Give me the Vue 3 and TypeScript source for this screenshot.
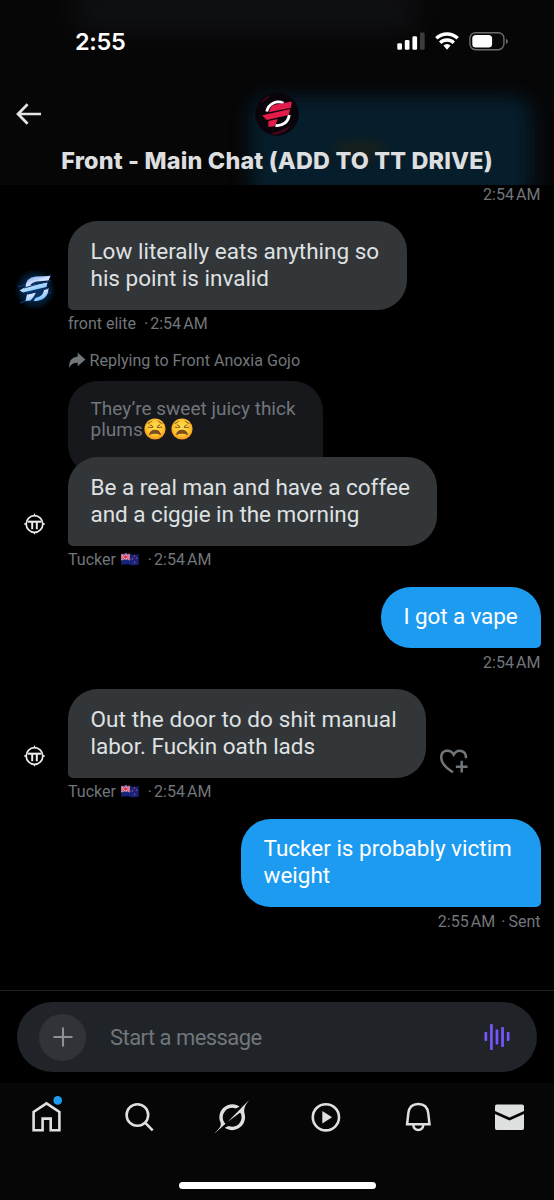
<script setup lang="ts">
interface Message {
  id: number
  own: boolean
  lines: { text: string; fit: string }[]
  bubble: string
  author?: string
  flag?: boolean
  avatar?: 'elite' | 'tucker'
  time: string
  sent?: boolean
  reply?: boolean
  like?: boolean
}

const messages: Message[] = [
  { id: 1, own: false, avatar: 'elite', author: 'front elite', time: '2:54 AM', bubble: 'b1',
    lines: [{ text: 'Low literally eats anything so', fit: 'l1' }, { text: 'his point is invalid', fit: 'l2' }] },
  { id: 2, own: false, avatar: 'tucker', author: 'Tucker', flag: true, time: '2:54 AM', bubble: 'b2', reply: true,
    lines: [{ text: 'Be a real man and have a coffee', fit: 'l3' }, { text: 'and a ciggie in the morning', fit: 'l4' }] },
  { id: 3, own: true, time: '2:54 AM', bubble: 'b3', lines: [{ text: 'I got a vape', fit: 'l5' }] },
  { id: 4, own: false, avatar: 'tucker', author: 'Tucker', flag: true, time: '2:54 AM', bubble: 'b4', like: true,
    lines: [{ text: 'Out the door to do shit manual', fit: 'l6' }, { text: 'labor. Fuckin oath lads', fit: 'l7' }] },
  { id: 5, own: true, time: '2:55 AM', sent: true, bubble: 'b5',
    lines: [{ text: 'Tucker is probably victim', fit: 'l8' }, { text: 'weight', fit: 'l9' }] },
]
const wave = [
  { x: 1.8, y: 9, h: 9 }, { x: 7.4, y: 1, h: 26 }, { x: 12.9, y: 6.5, h: 15 }, { x: 18.5, y: 4, h: 20 }, { x: 24.1, y: 9, h: 9 },
]
</script>

<template>
  <div class="phone">
    <header class="header">
      <div class="haze haze-blue"></div>
      <div class="haze haze-gold"></div>
      <div class="haze haze-grey"></div>
      <div class="status">
        <span class="clock">2:55</span>
        <svg class="status-icons" width="114" height="24" viewBox="0 0 114 24">
          <g fill="#fff">
            <rect x="1.3" y="14.2" width="4.7" height="6.6" rx="1.4" />
            <rect x="8.8" y="11" width="4.7" height="9.8" rx="1.4" />
            <rect x="16.4" y="7.3" width="4.7" height="13.5" rx="1.4" />
            <rect x="24" y="3.6" width="4.7" height="17.2" rx="1.4" fill="#3c3c3d" />
          </g>
          <g fill="none" stroke="#fff" stroke-width="3.4">
            <path d="M40.3 9.3A15.3 15.3 0 0 1 61.7 9.3" />
            <path d="M44.2 13.8A9.6 9.6 0 0 1 57.8 13.8" />
          </g>
          <path d="M47.4 16.6A5 5 0 0 1 54.6 16.6L51 20.8Z" fill="#fff" />
          <rect x="73.9" y="3.7" width="34" height="17" rx="5.6" fill="none" stroke="#6c6c6d" stroke-width="1.4" />
          <rect x="76.3" y="6" width="19.8" height="12.6" rx="3.6" fill="#fff" />
          <path d="M109.9 9.7q2 .8 2 2.7t-2 2.7Z" fill="#6c6c6d" />
        </svg>
      </div>
      <div class="bar">
        <svg class="back" width="28" height="24" viewBox="0 0 28 24" fill="none" stroke="#e3e4e5" stroke-width="2.7">
          <path d="M12.6 2.3 3 12l9.6 9.7M3.2 12H26" />
        </svg>
        <svg class="group" width="44" height="44" viewBox="0 0 44 44">
          <circle cx="22" cy="22" r="21.7" fill="#09030a" />
          <path d="M5 11q5-7 12-8L8 10ZM16 41q13-3 20-8-6 9-16 10Z" fill="#3e0718" />
          <g fill="none" stroke="#fff" stroke-width="2.8">
            <path d="M11.7 19.5A11.8 11.8 0 0 1 28.5 11.2" />
            <path d="M20.5 33.5a11.8 11.8 0 0 0 13.7-10.5" />
          </g>
          <g fill="#e51c4b">
            <path d="M18.5 13 36.8 9.6 36 15.8 14 20.2Q15.3 14.2 18.5 13Z" />
            <path d="M7.4 23.3 35.2 17 33.7 22.9 12 28.1Q9.8 26.7 7.4 23.3Z" />
            <path d="M13.5 29.1 22.5 27Q21 33 18.8 34.5L13.2 34.8Z" />
          </g>
        </svg>
      </div>
      <h1 class="title"><span>Front - Main Chat (ADD TO TT DRIVE)</span></h1>
    </header>

    <main class="chat">
      <div class="meta own first"><span class="time">2:54 AM</span></div>
      <section v-for="m in messages" :key="m.id" class="message" :class="{ own: m.own }">
        <template v-if="m.reply">
          <div class="replying">
            <svg width="18" height="17" viewBox="0 0 18 17"><path d="M9.7 .8 17.4 7.5 9.7 14.2V10.7Q3.6 10.6 .9 16 .8 5.2 9.7 4.5Z" fill="#71767b" /></svg>
            <span>Replying to Front Anoxia Gojo</span>
          </div>
          <div class="quoted">
            <div class="q1">They’re sweet juicy thick</div>
            <div class="q2">
              <span>plums</span>
              <svg v-for="n in 2" :key="n" class="weary" width="22" height="22" viewBox="0 0 22 22" role="img" aria-label="weary face">
                <defs>
                  <radialGradient :id="'face' + n" cx=".5" cy=".42" r=".6">
                    <stop offset="0" stop-color="#ffe052" /><stop offset=".65" stop-color="#fdc22e" /><stop offset="1" stop-color="#ef8c14" />
                  </radialGradient>
                </defs>
                <circle cx="11" cy="11" r="10.6" :fill="`url(#face${n})`" />
                <path d="M5 17.2Q5.6 11.7 11 11.7T17 17.2Q14 15.8 11 15.8T5 17.2Z" fill="#7d4d20" />
                <g fill="none" stroke="#75451c" stroke-width=".9" stroke-linecap="round">
                  <path d="M3.9 5.4Q6.8 4.9 7.8 3M18.1 5.4Q15.2 4.9 14.2 3" />
                  <path d="M6.2 6.9Q8.7 7.6 9.1 9.2 7 10 4.2 9.2M15.8 6.9Q13.3 7.6 12.9 9.2 15 10 17.8 9.2" />
                </g>
              </svg>
            </div>
          </div>
        </template>
        <div class="row" :class="{ overlap: m.reply }">
          <svg v-if="m.avatar === 'elite'" class="avatar" width="44" height="44" viewBox="0 0 44 44">
            <defs>
              <radialGradient id="glow"><stop offset=".35" stop-color="#073262" /><stop offset=".8" stop-color="#031323" /><stop offset="1" stop-color="#000" /></radialGradient>
              <linearGradient id="steel" x2=".6" y2="1"><stop stop-color="#4d91ef" /><stop offset=".5" stop-color="#d6e3ff" /><stop offset="1" stop-color="#6fc0ff" /></linearGradient>
            </defs>
            <circle cx="22" cy="23.5" r="20.5" fill="url(#glow)" />
            <path d="M5 21 38 9M7 37 38 26" stroke="#0b3d7c" stroke-width="1.2" />
            <g fill="url(#steel)">
              <path d="M12.5 21Q13 11.5 22.5 10.5L37.5 10 35.5 14.5 23.5 15.5Q18.5 16.5 17 19.5L34.5 16.5 33.5 21 10 26.5 6.5 24.5Z" />
              <path d="M14 28.5 23 26.5 20.5 31 17.5 34.5 12.5 35ZM31 23.5 35.5 22Q35.5 33 24 35L20.5 35 22.5 32Q31 30 31 23.5Z" />
            </g>
            <path d="M11 22 38 14.5M15 28 35 22.5" stroke="#08346d" stroke-width="1" />
          </svg>
          <svg v-else-if="m.avatar === 'tucker'" class="avatar" width="44" height="44" viewBox="0 0 44 44" fill="none" stroke="#ececec">
            <circle cx="21.5" cy="22" r="8.3" stroke-width="1.7" />
            <path d="M14.8 19.7H28.2" stroke-width="2.1" />
            <path d="M19.2 20V27.2M23.8 20V27.2" stroke-width="2" />
            <path d="M21.5 11.8V14M21.5 30V32.2M11.2 22H13.5M29.5 22H31.8" stroke-width="1.3" />
          </svg>
          <div class="bubble" :class="[m.bubble, { mine: m.own }]">
            <div v-for="l in m.lines" :key="l.fit" class="line"><span :class="l.fit">{{ l.text }}</span></div>
          </div>
          <svg v-if="m.like" class="like" width="30" height="28" viewBox="0 0 30 28" fill="none" stroke="#71767b" stroke-width="2.5">
            <path d="M14 24.2C6 19.4 2.2 14.4 2.2 9.3 2.2 1.7 11.3.5 14.7 6.6 18.2.4 27.4 1.8 26.9 10.2" />
            <path d="M22.7 12.8V24.6M16.9 18.7H28.5" />
          </svg>
        </div>
        <div class="meta" :class="{ own: m.own }">
          <span v-if="m.author" class="author" :class="{ short: m.flag }">{{ m.author }}</span>
          <svg v-if="m.flag" class="flag" width="18" height="13" viewBox="0 0 18 13" role="img" aria-label="New Zealand">
            <path d="M.3 1.4Q4.7-.2 9 1.2T17.7 1V11.5Q13.5 13 9 11.8T.3 12Z" fill="#15237b" />
            <path d="M.3 1.4Q4.7-.2 9 1.2V6.8H.3Z" fill="#3d3e93" />
            <path d="M.4 1.4 9 6.8M9 1.2.4 6.8M4.7.6V7M.3 4H9" stroke="#f0dce5" stroke-width="1.7" />
            <path d="M.4 1.4 9 6.8M9 1.2.4 6.8M4.7.6V7M.3 4H9" stroke="#d82645" stroke-width=".9" />
            <path d="M13.4 2v1.7M11.4 5.1v1.6M15.5 4.5v1.6M13.5 8.5v1.8" stroke="#a8406c" stroke-width="1.3" />
          </svg>
          <span v-if="m.author" class="dot">·</span>
          <span class="time">{{ m.time }}</span>
          <template v-if="m.sent"><span class="sent-dot">·</span><span>Sent</span></template>
        </div>
      </section>
    </main>

    <footer class="composer">
      <div class="pill">
        <span class="plus"><svg width="20" height="20" viewBox="0 0 20 20" stroke="#8d9195" stroke-width="2.1"><path d="M10 .5V19.5M.5 10H19.5" /></svg></span>
        <span class="placeholder">Start a message</span>
        <svg class="wave" width="27" height="28" viewBox="0 0 27 28" fill="#7856ff">
          <rect v-for="w in wave" :key="w.x" :x="w.x - 1.3" :y="w.y" width="2.7" :height="w.h" rx=".7" />
        </svg>
      </div>
    </footer>

    <nav class="nav">
      <div class="tabs">
        <svg viewBox="0 0 44 44" fill="none" stroke="#dedfdf" stroke-width="2.6">
          <path d="M9.6 35.2V17L22.5 8.4 35.4 17V35.2H26.7V23.6H18.6V35.2Z" />
          <circle cx="33.7" cy="5.4" r="4.3" fill="#1d9bf0" stroke="none" />
        </svg>
        <svg viewBox="0 0 44 44" fill="none" stroke="#dedfdf" stroke-width="2.6">
          <circle cx="20.4" cy="20" r="10.8" /><path d="M28 27.6 35.7 35.3" />
        </svg>
        <svg viewBox="0 0 44 44" fill="#dedfdf">
          <path transform="translate(5.6 5.3) scale(1.04)" d="M12.745 20.54l10.97-8.19c.539-.4 1.307-.244 1.564.38 1.349 3.288.746 7.241-1.938 9.955-2.683 2.714-6.417 3.31-9.83 1.954l-3.728 1.745c5.347 3.697 11.84 2.782 15.898-1.324 3.219-3.255 4.216-7.692 3.284-11.693l.008.009c-1.351-5.878.332-8.227 3.782-13.031L33 0l-4.54 4.59v-.014L12.743 20.544m-2.263 1.987c-3.837-3.707-3.175-9.446.1-12.755 2.42-2.449 6.388-3.448 9.852-1.979l3.72-1.737c-.67-.49-1.53-1.017-2.515-1.387-4.455-1.854-9.789-.931-13.41 2.728-3.483 3.523-4.579 8.94-2.697 13.561 1.405 3.454-.899 5.898-3.22 8.364C1.49 30.2.666 31.074 0 32l10.478-9.466" />
        </svg>
        <svg viewBox="0 0 44 44" fill="none" stroke="#dedfdf" stroke-width="2.6">
          <circle cx="23.9" cy="22.3" r="13.1" /><path d="M20.3 16 30.1 22.3 20.3 28.6Z" fill="#dedfdf" stroke="none" />
        </svg>
        <svg viewBox="0 0 44 44" fill="none" stroke="#dedfdf" stroke-width="2.5">
          <path d="M13.1 29.3 14.3 18.3C15 12.2 18.8 9 24.3 9S33.6 12.2 34.3 18.3L35.5 29.3Z" />
          <path d="M19.3 30C19.6 33.3 21.5 34.9 24.3 34.9S29 33.3 29.3 30" />
        </svg>
        <svg viewBox="0 0 44 44" fill="#dedfdf">
          <path d="M8 16V11.2Q8 9.5 9.7 9.5H35.3Q37 9.5 37 11.2V16L22.5 22.5Z" />
          <path d="M8 19 22.5 25.5 37 19V33.3Q37 35 35.3 35H9.7Q8 35 8 33.3Z" />
        </svg>
      </div>
      <div class="home-indicator"></div>
    </nav>
  </div>
</template>

<style>
body { margin: 0; background: #000; }
</style>

<style scoped>
.phone { width: 554px; height: 1200px; display: flex; flex-direction: column; overflow: hidden; background: #000; color: #e7e9ea; font-family: Roboto, "Liberation Sans", sans-serif; }
.phone span, .phone .q1 { white-space: pre; }
svg { display: block; flex: none; }

.header { height: 185px; flex: none; position: relative; overflow: hidden; background: #060607; }
.haze { position: absolute; }
.haze-blue { left: 250px; top: 96px; width: 282px; height: 110px; border-radius: 20px; background: #061d2b; filter: blur(9px); }
.haze-gold { left: 337px; top: 143px; width: 46px; height: 14px; background: #1c2118; filter: blur(7px); }
.haze-grey { left: 76px; top: -10px; width: 340px; height: 40px; background: #101113; filter: blur(14px); }
.status { position: relative; height: 82px; display: flex; justify-content: space-between; align-items: center; padding: 0 44px 0 75px; }
.clock { font-family: Inter, sans-serif; font-weight: 600; font-size: 23.5px; letter-spacing: -.3px; color: #fff; }
.status-icons { margin-top: -1px; }
.bar { position: relative; height: 64px; display: grid; grid-template-columns: 1fr 44px 1fr; align-items: center; }
.back { margin-left: 15px; }
.title { position: relative; margin: 0; height: 28px; display: flex; justify-content: center; align-items: center; font-family: Inter, Roboto, sans-serif; font-size: 23.4px; font-weight: 800; letter-spacing: .17px; color: #dddedf; }

.chat { height: 805px; flex: none; display: flex; flex-direction: column; }
.meta { height: 28px; display: flex; align-items: center; padding-left: 68px; font-size: 16px; color: #71767b; }
.meta.own { justify-content: flex-end; padding: 0 13.5px 0 0; }
.meta.first { height: 18px; margin-bottom: 18px; }
.message { margin-bottom: 13px; }
.time { word-spacing: -1.8px; }
.author { margin-right: 8px; }
.author.short { margin-right: 5px; }
.flag { margin-right: 9px; }
.dot { margin-right: 2px; }
.sent-dot { margin: 0 3px 0 6px; }
.row { display: flex; align-items: flex-end; padding: 0 13px; }
.own .row { justify-content: flex-end; }
.avatar { margin-right: 11px; }
.bubble { box-sizing: border-box; padding: 16.6px 0 18px 22.5px; border-radius: 30px 30px 30px 5px; background: #333639; font-size: 22.5px; color: #dfe1e2; }
.bubble.mine { border-radius: 30px 30px 5px 30px; background: #1d9bf0; color: #fff; }
.line { height: 27px; line-height: 27px; }
.l4 { letter-spacing: -.05px; }
.l5 { letter-spacing: -.12px; }
.l6 { letter-spacing: .1px; }
.b1 { width: 339px; }
.b2 { width: 369px; }
.b3 { width: 160px; }
.b4 { width: 358px; }
.b5 { width: 300px; }
.like { margin: 0 0 2px 13px; }

.replying { height: 18px; margin-top: .5px; padding-left: 68px; display: flex; align-items: center; gap: 3.5px; font-size: 16.1px; color: #71767b; }
.quoted { box-sizing: border-box; width: 255px; height: 94px; margin: 11.9px 0 0 68px; padding: 16.8px 0 0 22.5px; border-radius: 30px 30px 0 30px; background: #16181c; font-size: 19px; line-height: 21.5px; color: #71767b; }
.q2 { display: flex; align-items: center; }
.weary { margin: -2px 4px 0 1px; }
.row.overlap { position: relative; margin-top: -18px; }

.composer { box-sizing: border-box; height: 93px; flex: none; border-top: 1px solid #222426; padding: 11px 17px 0; }
.pill { height: 70px; border-radius: 35px; background: #202327; display: flex; align-items: center; }
.plus { width: 47px; height: 47px; margin: 0 24px 0 22px; border-radius: 50%; background: #303438; display: flex; align-items: center; justify-content: center; }
.placeholder { flex: 1; font-size: 22px; letter-spacing: -.55px; color: #71767b; }
.wave { margin-right: 26px; }

.nav { flex: 1; background: #060606; display: flex; flex-direction: column; align-items: center; }
.tabs { align-self: stretch; display: flex; justify-content: space-between; padding: 12px 23px 0 24px; }
.tabs svg { width: 44px; height: 44px; }
.home-indicator { width: 197px; height: 7px; margin-top: 42.5px; border-radius: 4px; background: #fff; }
</style>
